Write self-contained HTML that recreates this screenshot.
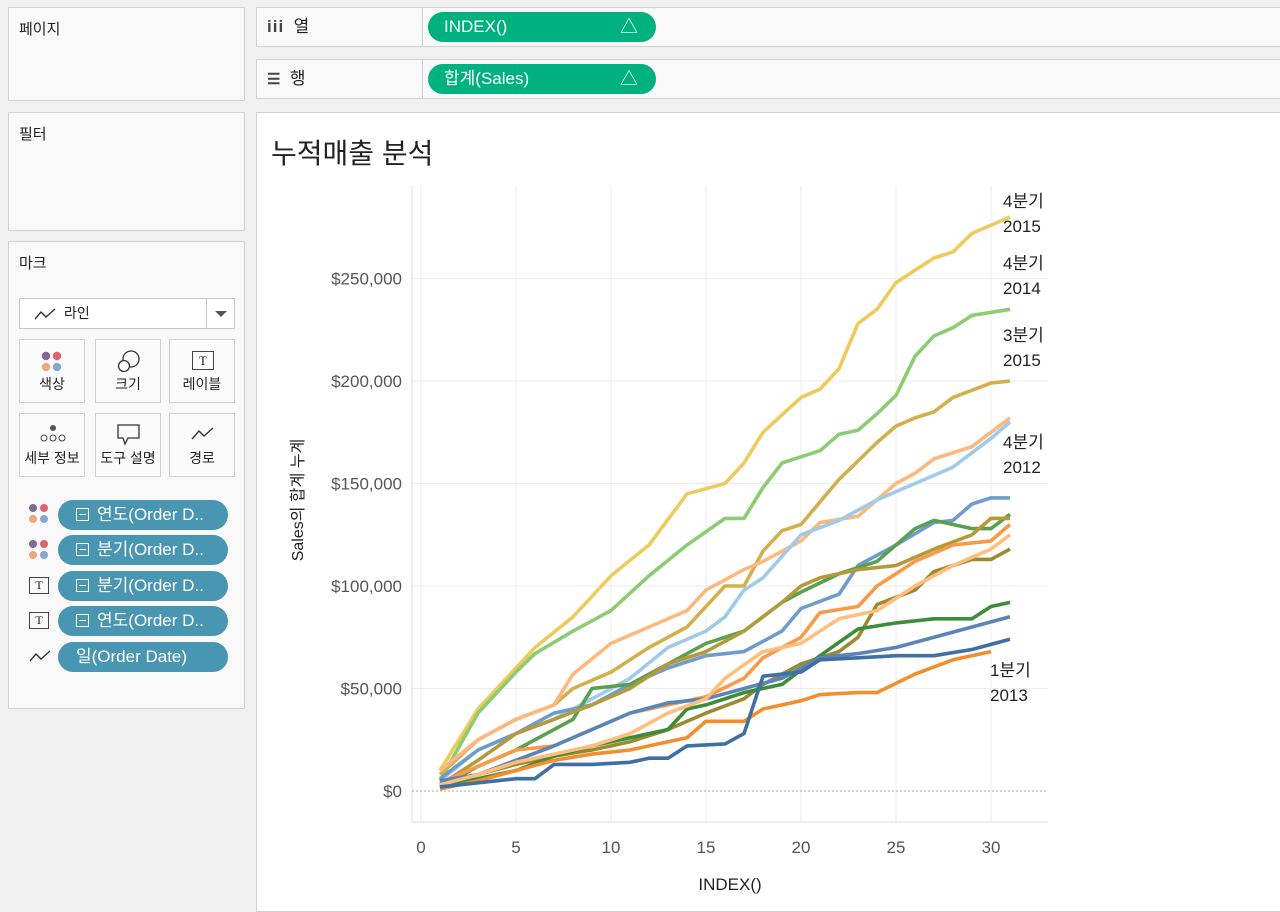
<!DOCTYPE html>
<html><head><meta charset="utf-8"><style>
*{box-sizing:border-box;margin:0;padding:0}
body{width:1280px;height:905px;background:#f0f0f0;font-family:"Liberation Sans","Noto Sans CJK KR",sans-serif;position:relative;overflow:hidden;color:#222}
.panel{position:absolute;background:#f9f9f9;border:1px solid #d2d2d2}
.ptitle{position:absolute;left:10px;top:10px;font-size:15px}
.shelf{position:absolute;left:256px;width:1030px;height:40px;background:#f9f9f9;border:1px solid #d2d2d2}
.shelf .lab{position:absolute;left:0;top:0;width:166px;height:38px;border-right:1px solid #d2d2d2;font-size:17px;line-height:38px;padding:0 0 0 10px}
.gpill{position:absolute;left:171px;top:4px;width:228px;height:30px;border-radius:15px;background:#00b180;color:#fff;font-size:17px;line-height:30px;padding:0 0 0 16px}
.gpill span{position:absolute;right:18px;top:0;font-size:18px}
.btn{position:absolute;width:66px;height:64px;border:1px solid #cfcfcf;background:#fbfbfb;font-size:14px;text-align:center}
.btn .t{position:absolute;bottom:8px;left:0;right:0}
.bpill{position:absolute;left:58px;width:170px;height:30px;border-radius:15px;background:#4996b2;color:#fff;font-size:17px;line-height:29px;padding:0 0 0 18px;white-space:nowrap}
.bpill i{display:inline-block;width:13px;height:13px;border:1.5px solid #fff;vertical-align:-1px;margin-right:8px;position:relative}
.bpill i:after{content:"";position:absolute;left:2px;right:2px;top:4.5px;height:1.5px;background:#fff}
.dots{position:absolute;left:29px;width:20px;height:20px}
.dots b{position:absolute;width:8px;height:8px;border-radius:50%}
.ticon{position:absolute;left:29px;width:20px;height:17px;border:1.3px solid #444;font-family:"Liberation Serif",serif;font-size:12px;text-align:center;line-height:15px}
</style></head><body>
<div class="panel" style="left:8px;top:7px;width:237px;height:94px"><div class="ptitle">페이지</div></div>
<div class="panel" style="left:8px;top:112px;width:237px;height:119px"><div class="ptitle">필터</div></div>
<div class="panel" style="left:8px;top:241px;width:237px;height:468px">
<div class="ptitle">마크</div>
<div style="position:absolute;left:10px;top:56px;width:216px;height:31px;border:1px solid #c8c8c8;background:#fff;font-size:14px;line-height:29px;padding:0 0 0 44px">라인
<svg style="position:absolute;left:14px;top:9px" width="22" height="12"><polyline points="1,11 7,4 12,9 21,1" fill="none" stroke="#333" stroke-width="1.4"/></svg>
<div style="position:absolute;right:0;top:0;width:28px;height:29px;border-left:1px solid #c8c8c8"><div style="position:absolute;left:8px;top:12px;border-left:6px solid transparent;border-right:6px solid transparent;border-top:6px solid #555"></div></div></div>
<div class="btn" style="left:10px;top:97px"><svg style="position:absolute;left:20px;top:11px" width="24" height="24"><circle cx="6" cy="5" r="4.2" fill="#7f6a93"/><circle cx="17" cy="5" r="4.2" fill="#e1626e"/><circle cx="6" cy="16" r="4.2" fill="#f3a57b"/><circle cx="17" cy="16" r="4.2" fill="#86a6cd"/></svg><div class="t">색상</div></div>
<div class="btn" style="left:86px;top:97px"><svg style="position:absolute;left:20px;top:8px" width="26" height="26"><circle cx="15" cy="11" r="8" fill="none" stroke="#333" stroke-width="1.3"/><circle cx="8" cy="18" r="5.5" fill="#fbfbfb" stroke="#333" stroke-width="1.3"/></svg><div class="t">크기</div></div>
<div class="btn" style="left:160px;top:97px"><div style="position:absolute;left:22px;top:11px;width:22px;height:19px;border:1.3px solid #444;font-family:'Liberation Serif',serif;font-size:13px;line-height:17px">T</div><div class="t">레이블</div></div>
<div class="btn" style="left:10px;top:171px"><svg style="position:absolute;left:18px;top:9px" width="30" height="22"><circle cx="15" cy="5" r="3" fill="#555"/><circle cx="6" cy="15" r="3" fill="none" stroke="#444"/><circle cx="15" cy="15" r="3" fill="none" stroke="#444"/><circle cx="24" cy="15" r="3" fill="none" stroke="#444"/></svg><div class="t">세부 정보</div></div>
<div class="btn" style="left:86px;top:171px"><svg style="position:absolute;left:20px;top:9px" width="26" height="24"><path d="M2 2H23V15H12L9 21L7 15H2Z" fill="none" stroke="#333" stroke-width="1.3"/></svg><div class="t">도구 설명</div></div>
<div class="btn" style="left:160px;top:171px"><svg style="position:absolute;left:21px;top:13px" width="24" height="14"><polyline points="1,12 8,4 13,9 22,1" fill="none" stroke="#333" stroke-width="1.4"/></svg><div class="t">경로</div></div>
</div>
<div class="dots" style="top:504px"><b style="left:0;top:0;background:#7f6a93"></b><b style="left:11px;top:0;background:#e1626e"></b><b style="left:0;top:11px;background:#f3a57b"></b><b style="left:11px;top:11px;background:#86a6cd"></b></div>
<div class="bpill" style="top:500px"><i></i>연도(Order D..</div>
<div class="dots" style="top:540px"><b style="left:0;top:0;background:#7f6a93"></b><b style="left:11px;top:0;background:#e1626e"></b><b style="left:0;top:11px;background:#f3a57b"></b><b style="left:11px;top:11px;background:#86a6cd"></b></div>
<div class="bpill" style="top:535px"><i></i>분기(Order D..</div>
<div class="ticon" style="top:577px">T</div>
<div class="bpill" style="top:571px"><i></i>분기(Order D..</div>
<div class="ticon" style="top:612px">T</div>
<div class="bpill" style="top:606px"><i></i>연도(Order D..</div>
<svg style="position:absolute;left:29px;top:650px" width="22" height="13"><polyline points="1,11 7,4 12,9 21,1" fill="none" stroke="#333" stroke-width="1.4"/></svg>
<div class="bpill" style="top:642px">일(Order Date)</div>

<div class="shelf" style="top:7px"><div class="lab"><b style="letter-spacing:1px;color:#444">iii</b>&nbsp; 열</div><div class="gpill">INDEX()<span>△</span></div></div>
<div class="shelf" style="top:59px"><div class="lab"><span style="font-size:15px;font-weight:bold;color:#444">☰</span>&nbsp; 행</div><div class="gpill">합계(Sales)<span>△</span></div></div>

<div style="position:absolute;left:256px;top:112px;width:1030px;height:800px;background:#fff;border:1px solid #d2d2d2"></div>
<div style="position:absolute;left:271px;top:132px;font-size:28px;color:#222">누적매출 분석</div>
<svg id="ch" style="position:absolute;left:0;top:0" width="1280" height="905"></svg>
<div style="position:absolute;left:286px;top:500px;transform:translate(-50%,-50%) rotate(-90deg);transform-origin:center;font-size:16px;white-space:nowrap;margin-left:10px">Sales의 합계 누계</div>
<script>
var s='';var X=function(i){return 421+19*i},Y=function(v){return 791-2.05*v};
for(var k=0;k<=30;k+=5)s+='<line x1="'+X(k)+'" y1="186" x2="'+X(k)+'" y2="822" stroke="#ececec"/>';
for(var v=50;v<=250;v+=50)s+='<line x1="412" y1="'+Y(v)+'" x2="1048" y2="'+Y(v)+'" stroke="#ececec"/>';
s+='<line x1="412" y1="186" x2="412" y2="822" stroke="#ddd"/><line x1="412" y1="822" x2="1048" y2="822" stroke="#ddd"/>';
s+='<line x1="412" y1="791" x2="1048" y2="791" stroke="#aaa" stroke-dasharray="2,2"/>';
var yl=['$0','$50,000','$100,000','$150,000','$200,000','$250,000'];
for(var j=0;j<6;j++)s+='<text x="402" y="'+(Y(j*50)+6)+'" text-anchor="end" font-size="17" fill="#555" font-family="Liberation Sans">'+yl[j]+'</text>';
for(k=0;k<=30;k+=5)s+='<text x="'+X(k)+'" y="853" text-anchor="middle" font-size="17" fill="#555" font-family="Liberation Sans">'+k+'</text>';
s+='<text x="730" y="890" text-anchor="middle" font-size="17" fill="#222" font-family="Liberation Sans">INDEX()</text>';
var L=[
['#eecb5c',[1,10,3,40,5,60,6,70,8,85,10,105,12,120,14,145,16,150,17,160,18,175,20,192,21,196,22,206,23,228,24,235,25,248,27,260,28,263,29,272,31,280]],
['#8ccc72',[1,5,3,38,5,58,6,67,8,78,10,88,12,105,14,120,16,133,17,133,18,148,19,160,21,166,22,174,23,176,24,184,25,193,26,212,27,222,28,226,29,232,31,235]],
['#d4b04c',[1,8,3,25,5,35,7,42,8,50,10,58,12,70,14,80,16,100,17,100,18,117,19,127,20,130,22,152,24,170,25,178,26,182,27,185,28,192,30,199,31,200]],
['#fbb97f',[1,10,3,25,5,35,7,42,8,57,10,72,12,80,14,88,15,98,17,108,18,112,20,122,21,131,23,134,25,150,26,155,27,162,29,168,31,182]],
['#9fcbe8',[1,5,3,20,5,28,7,35,9,45,11,55,13,70,15,78,16,85,17,98,18,104,20,125,22,132,24,142,26,150,28,158,30,172,31,180]],
['#6f9ccb',[1,6,3,20,5,28,7,38,9,42,11,52,13,60,15,66,17,68,19,78,20,89,22,96,23,110,25,120,27,131,28,132,29,140,30,143,31,143]],
['#59a14f',[1,2,3,12,5,20,8,35,9,50,11,52,13,62,15,72,17,78,19,92,20,97,22,106,24,112,26,128,27,132,29,128,30,128,31,135]],
['#b49a3a',[1,3,3,15,5,28,7,35,9,42,11,50,13,62,15,68,17,78,19,92,20,100,21,104,23,108,25,110,27,118,29,125,30,133,31,133]],
['#f89a47',[1,4,3,12,5,20,7,22,9,30,11,38,13,42,15,46,17,55,18,65,20,75,21,87,23,90,24,100,26,112,28,120,30,122,31,130]],
['#9c8a2f',[1,3,3,8,5,13,7,17,9,20,11,24,13,30,15,38,17,45,18,52,20,62,22,68,23,75,24,91,26,98,27,107,29,113,30,113,31,118]],
['#3e8c3a',[1,2,3,6,5,10,7,17,9,22,11,26,13,30,14,40,15,42,17,48,19,52,21,66,23,79,25,82,27,84,29,84,30,90,31,92]],
['#5b85b6',[1,5,3,8,5,15,7,22,9,30,11,38,13,43,15,45,17,50,19,55,21,65,23,67,25,70,27,75,29,80,31,85]],
['#ffbe7d',[1,3,3,8,5,14,7,18,9,22,11,28,13,38,15,45,16,55,18,68,20,72,22,84,24,88,26,100,28,110,30,118,31,125]],
['#f28e2b',[1,1,3,5,5,10,7,15,9,18,11,20,13,24,14,26,15,34,17,34,18,40,20,44,21,47,23,48,24,48,26,57,28,64,30,68]],
['#3f6fa3',[1,2,3,4,5,6,6,6,7,13,9,13,11,14,12,16,13,16,14,22,16,23,17,28,18,56,20,58,21,64,23,65,25,66,27,66,29,69,31,74]]];
L.forEach(function(l){var p=l[1],pts=[];for(var q=0;q<p.length;q+=2)pts.push(X(p[q]).toFixed(1)+','+Y(p[q+1]).toFixed(1));s+='<polyline points="'+pts.join(' ')+'" fill="none" stroke="'+l[0]+'" stroke-width="3.6" stroke-linejoin="round"/>';});
var lab=[[1003,207,'4분기','2015'],[1003,269,'4분기','2014'],[1003,341,'3분기','2015'],[1003,448,'4분기','2012'],[990,676,'1분기','2013']];
lab.forEach(function(a){s+='<text x="'+a[0]+'" y="'+a[1]+'" font-size="17" fill="#222" font-family="Liberation Sans,Noto Sans CJK KR">'+a[2]+'</text><text x="'+a[0]+'" y="'+(a[1]+25)+'" font-size="17" fill="#222" font-family="Liberation Sans">'+a[3]+'</text>';});
document.getElementById('ch').innerHTML=s;
</script>
</body></html>
